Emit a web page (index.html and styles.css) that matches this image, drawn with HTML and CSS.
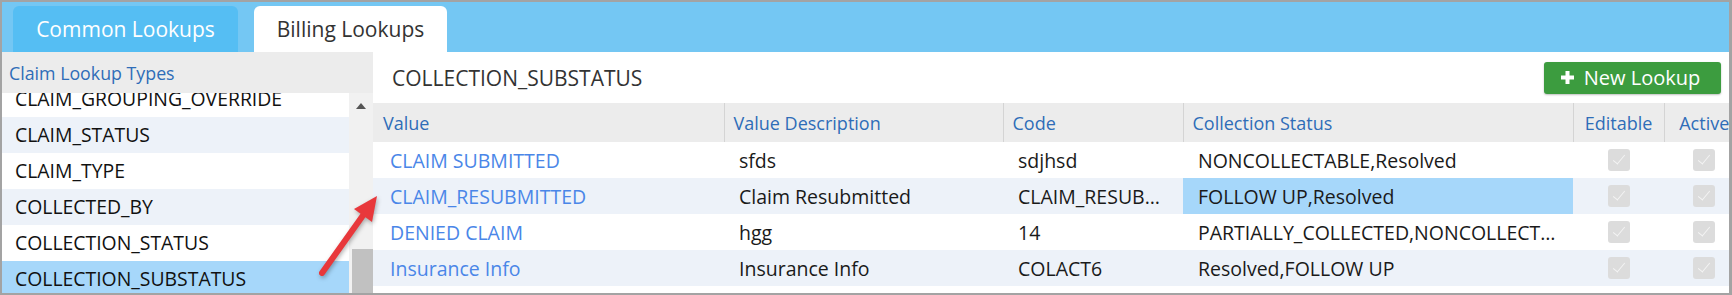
FILE: index.html
```html
<html>
<head>
    <link rel="stylesheet" href="styles.css">
</head>
<body>
    <div class="frame">
        <div class="tabs">
            <div class="tab tab-common">Common Lookups</div>
            <div class="tab tab-active">Billing Lookups</div>
        </div>
        <div class="main">
            <div class="types">
                <div class="types-head">Claim Lookup Types</div>
                <div class="types-body">
                    <div class="types-list">
                        <div class="type-row first">CLAIM_GROUPING_OVERRIDE</div>
                        <div class="type-row alt">CLAIM_STATUS</div>
                        <div class="type-row">CLAIM_TYPE</div>
                        <div class="type-row alt">COLLECTED_BY</div>
                        <div class="type-row">COLLECTION_STATUS</div>
                        <div class="type-row sel">COLLECTION_SUBSTATUS</div>
                    </div>
                    <div class="scrollbar">
                        <span class="scroll-up"></span>
                        <span class="scroll-thumb"></span>
                    </div>
                </div>
            </div>
            <div class="lookup">
                <div class="lookup-bar">
                    <span class="lookup-title">COLLECTION_SUBSTATUS</span>
                    <button class="btn-new">
                        <svg class="plus" width="13" height="13" viewBox="0 0 13 13"><rect x="4.5" y="0" width="4" height="13" fill="#fff"/><rect x="0" y="4.5" width="13" height="4" fill="#fff"/></svg>
                        New Lookup
                    </button>
                </div>
                <div class="grid-wrap">
                    <table class="grid">
                        <colgroup>
                            <col style="width:351px">
                            <col style="width:279px">
                            <col style="width:180px">
                            <col style="width:390px">
                            <col style="width:91px">
                            <col style="width:80px">
                        </colgroup>
                        <thead>
                            <tr>
                                <th>Value</th>
                                <th>Value Description</th>
                                <th>Code</th>
                                <th>Collection Status</th>
                                <th class="c">Editable</th>
                                <th class="c">Active</th>
                            </tr>
                        </thead>
                        <tbody>
                            <tr>
                                <td class="val"><a>CLAIM SUBMITTED</a></td>
                                <td>sfds</td>
                                <td>sdjhsd</td>
                                <td>NONCOLLECTABLE,Resolved</td>
                                <td class="c"><span class="check"></span></td>
                                <td class="c"><span class="check"></span></td>
                            </tr>
                            <tr class="alt">
                                <td class="val"><a>CLAIM_RESUBMITTED</a></td>
                                <td>Claim Resubmitted</td>
                                <td>CLAIM_RESUBMITTED</td>
                                <td class="hl">FOLLOW UP,Resolved</td>
                                <td class="c"><span class="check"></span></td>
                                <td class="c"><span class="check"></span></td>
                            </tr>
                            <tr>
                                <td class="val"><a>DENIED CLAIM</a></td>
                                <td>hgg</td>
                                <td>14</td>
                                <td>PARTIALLY_COLLECTED,NONCOLLECTABLE,Resolved</td>
                                <td class="c"><span class="check"></span></td>
                                <td class="c"><span class="check"></span></td>
                            </tr>
                            <tr class="alt">
                                <td class="val"><a>Insurance Info</a></td>
                                <td>Insurance Info</td>
                                <td>COLACT6</td>
                                <td>Resolved,FOLLOW UP</td>
                                <td class="c"><span class="check"></span></td>
                                <td class="c"><span class="check"></span></td>
                            </tr>
                        </tbody>
                    </table>
                </div>
            </div>
        </div>
        <svg class="pointer" width="1732" height="295" viewBox="0 0 1732 295">
            <line x1="322" y1="273" x2="364" y2="214" stroke="#e8383b" stroke-width="6" stroke-linecap="round"/>
            <polygon points="377,196 372,222 354,209" fill="#e8383b"/>
        </svg>
    </div>
</body>
</html>
```

FILE: styles.css
```css
body {
    margin: 0;
    font-family: "Open Sans", "Noto Sans", sans-serif;
}

.frame {
    position: relative;
    width: 1732px;
    height: 295px;
    box-sizing: border-box;
    border: 2px solid #a3a3a3;
    border-right-width: 3px;
    display: flex;
    flex-direction: column;
    overflow: hidden;
}

/* tabs */
.tabs {
    height: 50px;
    flex: none;
    background: #74c7f3;
    display: flex;
    align-items: flex-end;
    gap: 16px;
    padding-left: 11px;
}
.tab {
    height: 46px;
    display: flex;
    align-items: center;
    justify-content: center;
    font-size: 21px;
    border-radius: 6px 6px 0 0;
}
.tab-common {
    width: 225px;
    background: #55bef3;
    color: #fff;
}
.tab-active {
    width: 193px;
    background: #fff;
    color: #333;
}

.main {
    flex: 1;
    display: flex;
    min-height: 0;
}

/* left list */
.types {
    width: 371px;
    display: flex;
    flex-direction: column;
}
.types-head {
    height: 41px;
    flex: none;
    background: #ececec;
    color: #2f6db8;
    font-size: 17.8px;
    padding-left: 7px;
    display: flex;
    align-items: center;
}
.types-body {
    flex: 1;
    display: flex;
    overflow: hidden;
}
.types-list {
    flex: 1;
}
.type-row {
    height: 36px;
    line-height: 36px;
    padding-left: 13px;
    font-size: 19.4px;
    color: #111;
    background: #fff;
    white-space: nowrap;
}
.type-row.first {
    margin-top: -12px;
}
.type-row.alt {
    background: #edf2f9;
}
.type-row.sel {
    background: #a6d7fa;
}
.scrollbar {
    width: 24px;
    background: #f1f1f1;
    display: flex;
    flex-direction: column;
    justify-content: space-between;
    align-items: center;
}
.scroll-up {
    margin-top: 10px;
    width: 0;
    height: 0;
    border-left: 5px solid transparent;
    border-right: 5px solid transparent;
    border-bottom: 6px solid #555;
}
.scroll-thumb {
    align-self: flex-end;
    width: 21px;
    height: 44px;
    background: #c1c1c1;
}

/* right panel */
.lookup {
    flex: 1;
    min-width: 0;
    background: #fff;
    display: flex;
    flex-direction: column;
}
.lookup-bar {
    height: 51px;
    flex: none;
    display: flex;
    align-items: center;
    justify-content: space-between;
    padding: 0 8px 0 19px;
}
.lookup-title {
    font-size: 21px;
    color: #333;
}
.btn-new {
    width: 177px;
    height: 32px;
    background: #3c9c3f;
    color: #fff;
    border: 0;
    border-radius: 3px;
    font-family: inherit;
    font-size: 20px;
    display: flex;
    align-items: center;
    justify-content: center;
    gap: 10px;
    padding: 0 4px 0 0;
    box-shadow: 0 1px 2px rgba(0, 0, 0, .25);
}

.grid-wrap {
    flex: 1;
    overflow: hidden;
}
.grid {
    border-collapse: collapse;
    table-layout: fixed;
    width: 1371px;
}
.grid th {
    height: 39px;
    padding: 0 0 0 9px;
    background: #ececec;
    color: #2f6db8;
    font-weight: normal;
    font-size: 18px;
    text-align: left;
    border-left: 1px solid #d4d4d4;
    white-space: nowrap;
    overflow: hidden;
}
.grid th:first-child {
    border-left: 0;
    padding-left: 10px;
}
.grid th.c {
    text-align: center;
    padding: 0;
}
.grid td {
    height: 36px;
    padding: 0 10px 0 15px;
    font-size: 19.5px;
    color: #1a1a1a;
    white-space: nowrap;
    overflow: hidden;
    text-overflow: ellipsis;
}
.grid tr.alt td {
    background: #edf2f9;
}
.grid td.val {
    padding-left: 17px;
}
.grid td.val a {
    color: #4a86e8;
}
.grid tr td.hl {
    background: #a6d7fa;
}
.grid td.c {
    text-align: center;
    padding: 0;
}
.check {
    display: inline-block;
    position: relative;
    width: 22px;
    height: 22px;
    border-radius: 3px;
    background: #dcdcdc;
    vertical-align: middle;
}
.check::after {
    content: "";
    position: absolute;
    left: 8px;
    top: 3px;
    width: 5px;
    height: 11px;
    border-right: 1.5px solid #f4f4f4;
    border-bottom: 1.5px solid #f4f4f4;
    transform: rotate(40deg);
}

.pointer {
    position: absolute;
    left: -2px;
    top: -2px;
    pointer-events: none;
    filter: drop-shadow(1px 2px 2px rgba(0, 0, 0, .3));
}
```
